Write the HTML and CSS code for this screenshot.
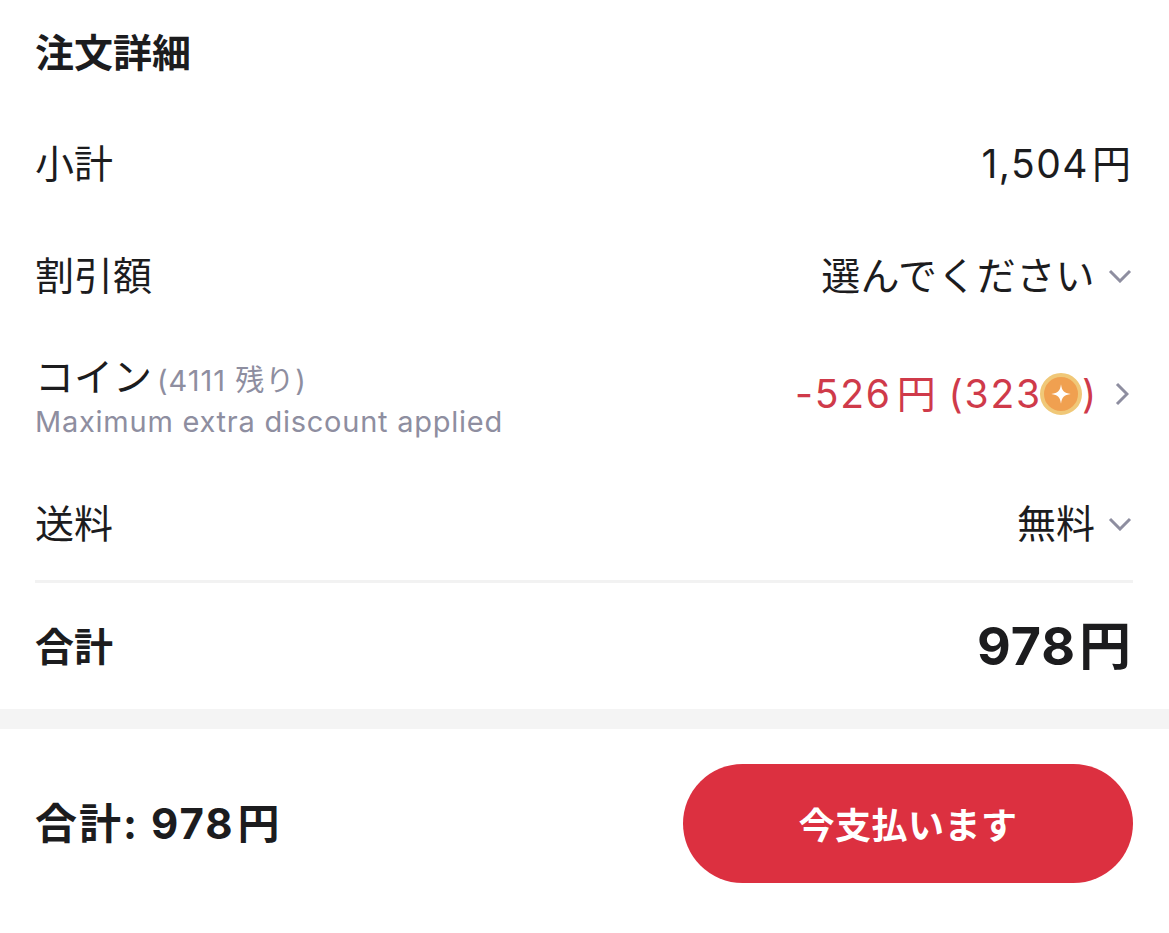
FILE: index.html
```html
<!DOCTYPE html>
<html lang="ja">
<head>
    <meta charset="UTF-8">
    <meta name="viewport" content="width=device-width, initial-scale=1.0">
    <title>注文詳細</title>
    <link rel="stylesheet" href="styles.css">
</head>
<body>
    <div class="section">
        <h2 class="title">注文詳細</h2>

        <div class="row row-subtotal">
            <span>小計</span>
            <span class="amount">1,504<span class="yen">円</span></span>
        </div>

        <div class="row row-discount">
            <span>割引額</span>
            <span class="value select-value">選んでください
                <svg class="chevron" viewBox="0 0 24 14"><path d="M2 2l10 10L22 2"/></svg>
            </span>
        </div>

        <div class="row row-coin">
            <div class="coin-info">
                <div class="coin-label">コイン <span class="coin-left">(4111 残り)</span></div>
                <div class="coin-note">Maximum extra discount applied</div>
            </div>
            <span class="value coin-value">-526<span class="yen">円</span>&nbsp;(323<span class="coin"><svg viewBox="0 0 16 16"><path d="M8 1.5C8.6 6 10 7.400 14.500 8 10 8.600 8.600 10 8 14.500 7.400 10 6 8.600 1.500 8 6 7.400 7.400 6 8 1.500z"/></svg></span>)
                <svg class="chevron-right" viewBox="0 0 14 24"><path d="M2 2l10 10L2 22"/></svg>
            </span>
        </div>

        <div class="row row-shipping">
            <span>送料</span>
            <span class="value">無料
                <svg class="chevron" viewBox="0 0 24 14"><path d="M2 2l10 10L22 2"/></svg>
            </span>
        </div>

        <div class="row row-total">
            <span>合計</span>
            <span class="total-amount">978<span class="yen">円</span></span>
        </div>
    </div>

    <div class="footer">
        <div class="footer-total">合計: 978<span class="yen">円</span></div>
        <button class="pay-button">今支払います</button>
    </div>
</body>
</html>
```

FILE: styles.css
```css
body {
    margin: 0;
    background-color: #f4f4f4;
    color: #1c1c1e;
    font-family: "Inter", "Noto Sans CJK JP", sans-serif;
    font-size: 39px;
}
.section {
    background-color: #fff;
    padding: 29px 36px 0 35px;
    height: 680px;
}
.title {
    margin: 0;
    font-size: 39px;
    line-height: 48px;
    font-weight: 700;
}
.row {
    display: flex;
    justify-content: space-between;
    align-items: center;
    line-height: 48px;
}
.row-subtotal {
    margin-top: 63px;
}
.row-discount {
    margin-top: 64px;
}
.row-coin {
    margin-top: 54px;
    height: 80px;
}
.row-shipping {
    margin-top: 66px;
    padding-bottom: 32px;
    border-bottom: 3px solid #f2f2f2;
}
.row-total {
    margin-top: 40px;
    font-weight: 700;
}
.amount {
    margin-right: 2px;
    letter-spacing: 1.5px;
}
.value {
    display: flex;
    align-items: center;
}
.select-value {
    letter-spacing: 0.4px;
}
.yen {
    margin-left: 3px;
    letter-spacing: 0;
}
.chevron {
    width: 24px;
    height: 14px;
    margin-left: 13px;
    margin-right: 1px;
}
.chevron-right {
    width: 14px;
    height: 24px;
    margin-left: 17px;
    margin-right: 4px;
}
.chevron path, .chevron-right path {
    fill: none;
    stroke: #8e8ea0;
    stroke-width: 3;
}
.coin-info {
    padding-top: 5px;
}
.coin-label {
    line-height: 46px;
}
.coin-left {
    margin-left: -6px;
    color: #8e8ea0;
    font-size: 29px;
    letter-spacing: 1px;
}
.coin-note {
    color: #8e8ea0;
    font-size: 29px;
    line-height: 36px;
    letter-spacing: 0.75px;
}
.coin-value {
    color: #cf3a4a;
    letter-spacing: 1.8px;
}
.coin-value .yen {
    margin-left: 5px;
}
.coin {
    display: flex;
    align-items: center;
    justify-content: center;
    width: 42px;
    height: 42px;
    margin-left: -2px;
    border: 4px solid #f0c878;
    border-radius: 50%;
    background-color: #f0a050;
    box-sizing: border-box;
}
.coin svg {
    width: 24px;
    height: 24px;
    fill: #fff;
}
.total-amount {
    font-size: 52px;
    margin-right: 2px;
    letter-spacing: 1px;
}
.footer {
    display: flex;
    justify-content: space-between;
    align-items: center;
    box-sizing: border-box;
    height: 204px;
    padding: 0 36px 16px 35px;
    background-color: #fff;
    margin-top: 20px;
}
.footer-total {
    margin-bottom: 6px;
    font-size: 42px;
    font-weight: 700;
    letter-spacing: 2px;
}
.pay-button {
    width: 450px;
    height: 119px;
    border: none;
    border-radius: 60px;
    background-color: #dc3040;
    color: #fff;
    font-family: inherit;
    font-size: 36px;
    font-weight: 700;
    letter-spacing: 0.5px;
    cursor: pointer;
}
```
